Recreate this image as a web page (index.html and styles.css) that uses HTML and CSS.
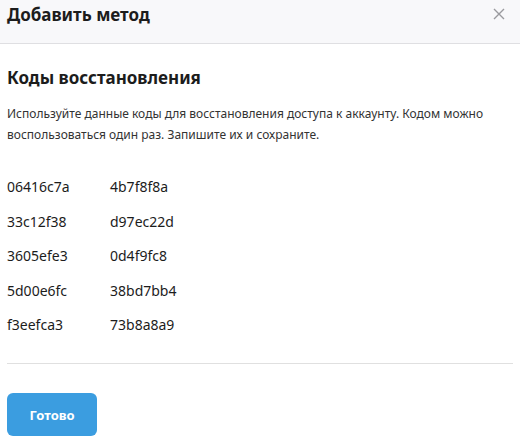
FILE: index.html
```html
<!DOCTYPE html>
<html lang="ru">
<head>
<meta charset="utf-8">
<link rel="stylesheet" href="styles.css">
</head>
<body>
<div class="modal">
  <header class="modal-header">
    <h1 class="modal-title">Добавить метод</h1>
    <button class="close-btn" aria-label="Закрыть">
      <svg width="12" height="12" viewBox="0 0 12 12"><path d="M1 1L11 11M11 1L1 11" stroke="#9a9a9e" stroke-width="1.4" fill="none"/></svg>
    </button>
  </header>
  <section class="modal-body">
    <h2 class="section-title">Коды восстановления</h2>
    <p class="description">Используйте данные коды для восстановления доступа к аккаунту. Кодом можно воспользоваться один раз. Запишите их и сохраните.</p>
    <div class="codes">
      <span>06416c7a</span><span>4b7f8f8a</span>
      <span>33c12f38</span><span>d97ec22d</span>
      <span>3605efe3</span><span>0d4f9fc8</span>
      <span>5d00e6fc</span><span>38bd7bb4</span>
      <span>f3eefca3</span><span>73b8a8a9</span>
    </div>
    <hr class="divider">
    <button class="done-btn">Готово</button>
  </section>
</div>
</body>
</html>
```
FILE: styles.css
```css
* { box-sizing: border-box; }
html, body { margin: 0; padding: 0; background: #fff; }
body {
  font-family: "Noto Sans", "Open Sans", sans-serif;
  color: #1a1a1a;
  width: 520px;
  height: 445px;
  overflow: hidden;
}
.modal-header {
  height: 44px;
  background: #f8f8fa;
  border-bottom: 1px solid #dfdfe2;
  display: flex;
  align-items: flex-start;
  justify-content: space-between;
  padding: 3px 15px 0 7px;
}
.modal-title {
  margin: 0;
  font-size: 17px;
  font-weight: 700;
  line-height: 24px;
  color: #1c1c1c;
}
.close-btn {
  background: none;
  border: 0;
  padding: 0;
  margin-top: 5px;
  width: 12px;
  height: 12px;
  display: flex;
}
.modal-body {
  padding: 22px 7px 0 7px;
}
.section-title {
  margin: 0;
  font-size: 17px;
  font-weight: 700;
  line-height: 24px;
  color: #1c1c1c;
}
.description {
  margin: 13px 0 0;
  font-size: 12px;
  line-height: 21px;
  color: #333;
}
.codes {
  margin-top: 32px;
  display: grid;
  grid-template-columns: 103px auto;
  row-gap: 14.5px;
  font-size: 14px;
  line-height: 20px;
  color: #1c1c1c;
}
.divider {
  margin: 28px 0 0;
  border: 0;
  border-top: 1px solid #e0e0e0;
  height: 0;
}
.done-btn {
  margin-top: 29px;
  width: 90px;
  height: 43px;
  border: 0;
  border-radius: 6px;
  background: #3b9de0;
  color: #fff;
  font-family: inherit;
  font-size: 13px;
  font-weight: 700;
}
```
